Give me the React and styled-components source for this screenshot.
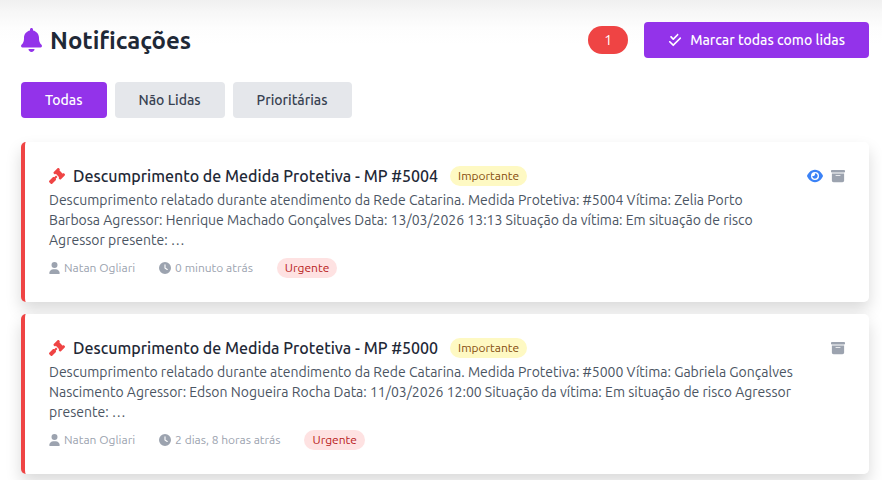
import React, { useState } from 'react';
import styled, { createGlobalStyle } from 'styled-components';
import {
  FaBell,
  FaBoxArchive,
  FaCheckDouble,
  FaClock,
  FaEye,
  FaGavel,
  FaUser,
} from 'react-icons/fa6';

const GlobalStyle = createGlobalStyle`
  *, *:before, *:after {
    box-sizing: border-box;
  }

  body {
    margin: 0;
    background: #fff;
    color: #1f2937;
    font-family: Ubuntu, "Open Sans", sans-serif;
    font-size: 14px;
    line-height: 20px;
  }

  svg {
    display: block;
    flex-shrink: 0;
  }
`;

const Page = styled.main`
  padding: 22px 13px 6px 21px;
  background: linear-gradient(#f0f0f0, #f7f7f7 12px, #fdfdfd 28px, #fff 44px) no-repeat;
`;

const Header = styled.header`
  display: flex;
  align-items: center;
  justify-content: space-between;
  margin-bottom: 24px;
`;

const Heading = styled.h1`
  display: flex;
  align-items: center;
  gap: 8px;
  margin: 0;
  font-size: 24px;
  font-weight: 600;
  line-height: 33px;

  svg {
    width: 21px;
    color: #9333ea;
  }
`;

const HeaderActions = styled.div`
  display: flex;
  align-items: center;
  gap: 16px;
`;

const Counter = styled.span`
  padding: 4px 16px;
  border-radius: 14px;
  background: #ef4444;
  color: #fff;
`;

const Button = styled.button`
  display: flex;
  align-items: center;
  gap: 8px;
  padding: 8px 24px;
  border: 0;
  border-radius: 4px;
  background: ${props => (props.$active ? '#9333ea' : '#e5e7eb')};
  color: ${props => (props.$active ? '#fff' : '#374151')};
  font: inherit;
  font-weight: 500;
  cursor: pointer;
`;

const Filters = styled.nav`
  display: flex;
  gap: 8px;
  margin-bottom: 24px;
`;

const List = styled.div`
  display: grid;
  gap: 12px;
`;

const Card = styled.article`
  display: flex;
  align-items: flex-start;
  justify-content: space-between;
  gap: 16px;
  padding: 24px;
  border-left: 4px solid #ef4444;
  border-radius: 5px;
  background: #fff;
  box-shadow: 0 8px 16px rgba(0, 0, 0, .15);
`;

const TitleRow = styled.div`
  display: flex;
  align-items: center;
  gap: 12px;
  margin-bottom: 4px;
`;

const Title = styled.h2`
  display: flex;
  align-items: center;
  gap: 8px;
  margin: 0;
  font-size: 16px;
  font-weight: 500;
  line-height: 20px;

  svg {
    color: #ef4444;
  }
`;

const Tag = styled.span`
  padding: 2px 8px;
  border-radius: 10px;
  background: ${props => (props.$urgent ? '#fee2e2' : '#fef9c3')};
  color: ${props => (props.$urgent ? '#b91c1c' : '#854d0e')};
  font-size: 12px;
  line-height: 16px;
`;

const Message = styled.p`
  margin: 0 0 8px;
  color: #4b5563;
  white-space: pre-line;
`;

const Meta = styled.div`
  display: flex;
  align-items: center;
  gap: 24px;
  color: #9ca3af;
  font-size: 12px;
`;

const MetaItem = styled.span`
  display: flex;
  align-items: center;
  gap: 4px;
`;

const UserIcon = styled(FaUser)`
  width: 11px;
`;

const CardActions = styled.div`
  display: flex;
  gap: 8px;
`;

const IconButton = styled.button`
  display: flex;
  align-items: center;
  height: 20px;
  padding: 0;
  border: 0;
  background: none;
  color: ${props => (props.$blue ? '#3b82f6' : '#9ca3af')};
  cursor: pointer;
`;

const filters = ['Todas', 'Não Lidas', 'Prioritárias'];

const notifications = [
  {
    id: 5004,
    message: `Descumprimento relatado durante atendimento da Rede Catarina. Medida Protetiva: #5004 Vítima: Zelia Porto
      Barbosa Agressor: Henrique Machado Gonçalves Data: 13/03/2026 13:13 Situação da vítima: Em situação de risco
      Agressor presente: …`,
    author: 'Natan Ogliari',
    time: '0 minuto atrás',
    unread: true,
  },
  {
    id: 5000,
    message: `Descumprimento relatado durante atendimento da Rede Catarina. Medida Protetiva: #5000 Vítima: Gabriela Gonçalves
      Nascimento Agressor: Edson Nogueira Rocha Data: 11/03/2026 12:00 Situação da vítima: Em situação de risco Agressor
      presente: …`,
    author: 'Natan Ogliari',
    time: '2 dias, 8 horas atrás',
    unread: false,
  },
];

const Notification = ({ item }) => (
  <Card>
    <div>
      <TitleRow>
        <Title><FaGavel size={16} />Descumprimento de Medida Protetiva - MP #{item.id}</Title>
        <Tag>Importante</Tag>
      </TitleRow>
      <Message>{item.message}</Message>
      <Meta>
        <MetaItem><UserIcon size={12} />{item.author}</MetaItem>
        <MetaItem><FaClock size={12} />{item.time}</MetaItem>
        <Tag $urgent>Urgente</Tag>
      </Meta>
    </div>
    <CardActions>
      {item.unread && (
        <IconButton $blue aria-label="Marcar como lida"><FaEye size={16} /></IconButton>
      )}
      <IconButton aria-label="Arquivar"><FaBoxArchive size={14} /></IconButton>
    </CardActions>
  </Card>
);

const App = () => {
  const [filter, setFilter] = useState('Todas');

  return (
    <>
      <GlobalStyle />
      <Page>
        <Header>
          <Heading><FaBell size={24} />Notificações</Heading>
          <HeaderActions>
            <Counter>1</Counter>
            <Button $active><FaCheckDouble size={14} />Marcar todas como lidas</Button>
          </HeaderActions>
        </Header>
        <Filters>
          {filters.map(name => (
            <Button key={name} $active={name === filter} onClick={() => setFilter(name)}>{name}</Button>
          ))}
        </Filters>
        <List>
          {notifications.map(item => <Notification key={item.id} item={item} />)}
        </List>
      </Page>
    </>
  );
};

export default App;
